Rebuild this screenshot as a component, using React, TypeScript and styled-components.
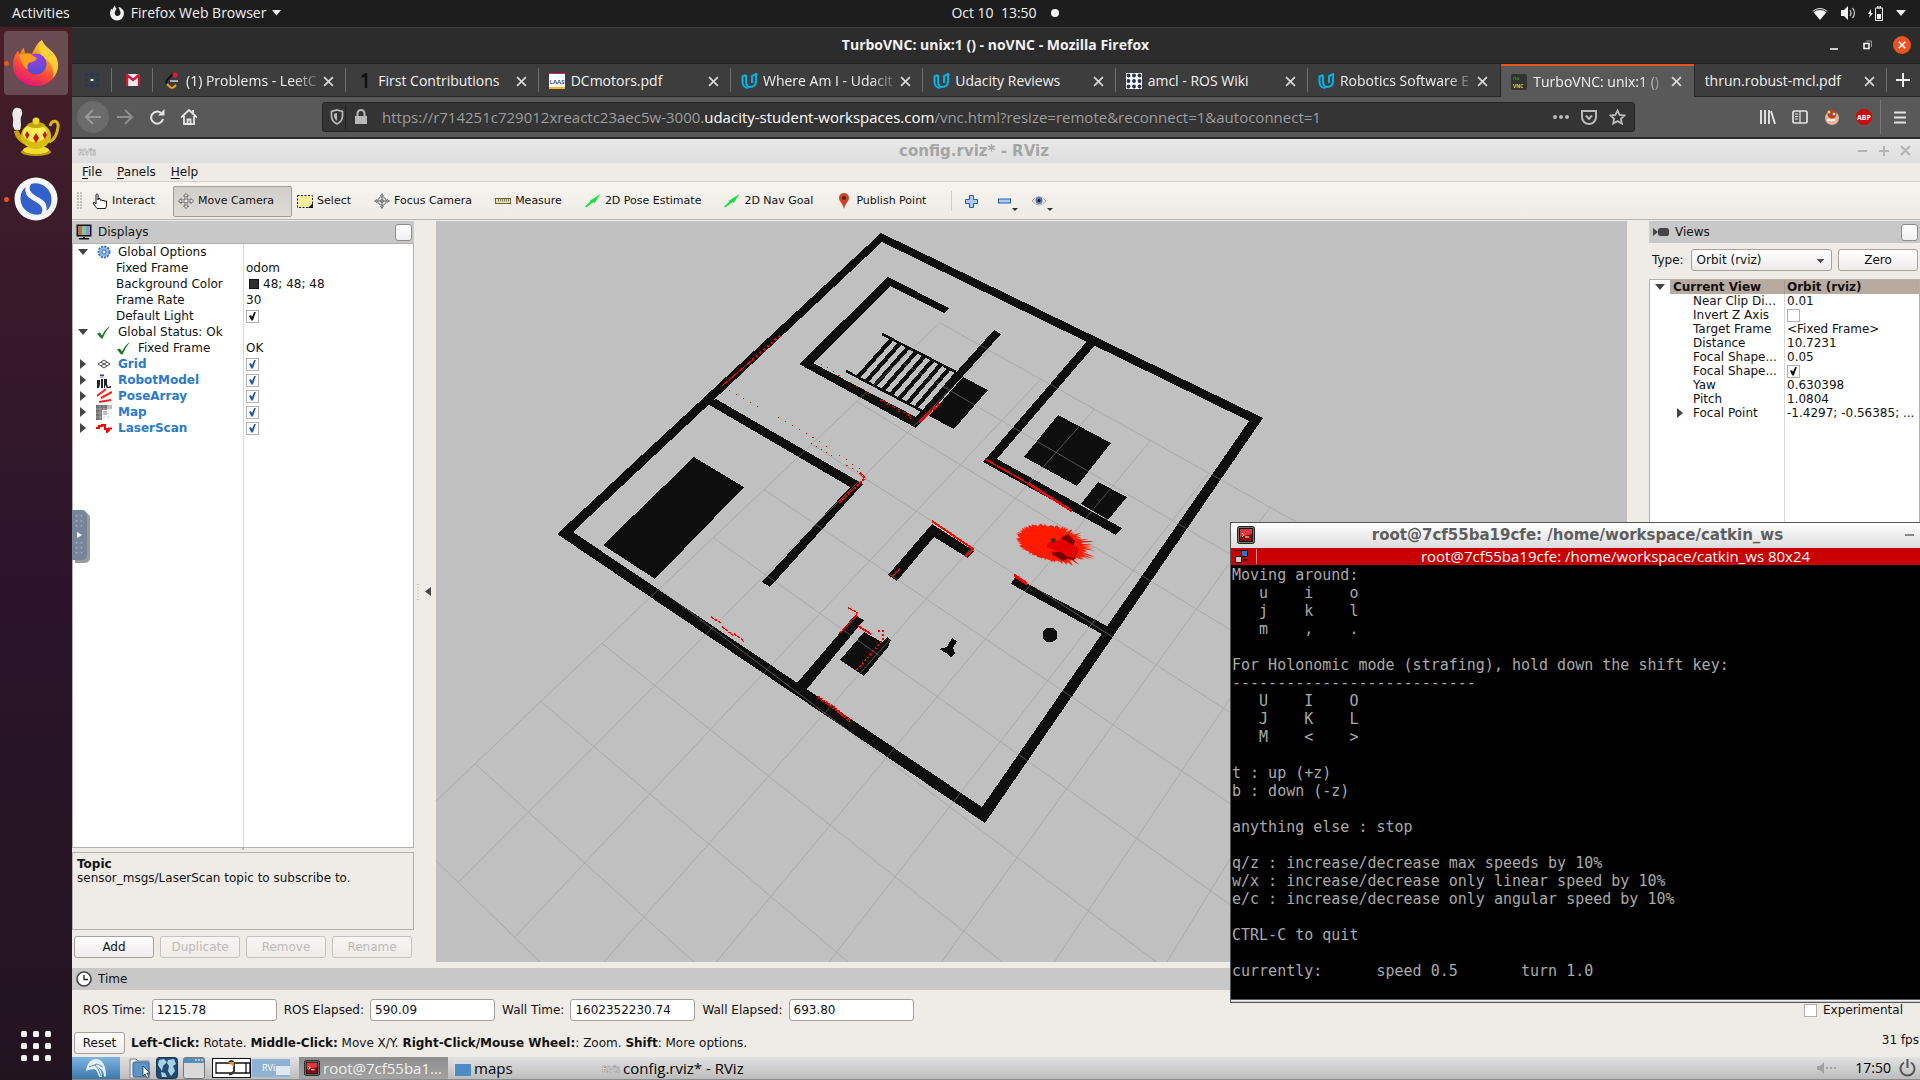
import React from "react";
import styled, { createGlobalStyle, css } from "styled-components";

const UI = `"Open Sans", "Noto Sans", sans-serif`;
const QT = `"DejaVu Sans", "Noto Sans", sans-serif`;
const MONO = `"DejaVu Sans Mono", "Liberation Mono", monospace`;

const Global = createGlobalStyle`
  *, *::before, *::after { box-sizing: border-box; }
  body { margin: 0; background: #2c1429; }
  button, input, select { font: inherit; color: inherit; margin: 0; padding: 0; border: 0; background: none; }
  svg { display: block; flex: none; }
`;

/* ---------- desktop shell ---------- */

const Desktop = styled.div`
  position: relative;
  display: flex;
  flex-direction: column;
  height: 100vh;
  overflow: hidden;
  font: 14px/20px ${UI};
  color: #f2f2f2;
`;

const TopBar = styled.header`
  display: grid;
  grid-template-columns: 1fr auto 1fr;
  align-items: center;
  flex: none;
  height: 27px;
  padding: 0 14px 1px 12px;
  background: #1d1d1d;
`;

const TopGroup = styled.div<{ $end?: boolean }>`
  display: flex;
  align-items: center;
  gap: ${(p) => (p.$end ? "12px" : "6px")};
  justify-content: ${(p) => (p.$end ? "flex-end" : "flex-start")};
`;

const ShellButton = styled.button<{ $wide?: boolean }>`
  display: flex;
  align-items: center;
  gap: 6px;
  white-space: pre;
  margin-right: ${(p) => (p.$wide ? "33px" : "0")};
`;

const ClockButton = styled(ShellButton)`
  gap: 14px;
  margin-left: 92px;
  &::after {
    content: "";
    width: 8px;
    height: 8px;
    border-radius: 50%;
    background: #f2f2f2;
  }
`;

const Body = styled.div`
  display: flex;
  flex: 1;
  min-height: 0;
`;

const Dock = styled.nav`
  display: flex;
  flex-direction: column;
  align-items: center;
  gap: 4px;
  flex: none;
  width: 72px;
  padding: 4px 0 16px;
  background: linear-gradient(#471f27 0, #3c1b2a 190px, #2b142b 560px, #22141f 100%);
`;

const DockItem = styled.button<{ $active?: boolean; $running?: boolean; $last?: boolean }>`
  position: relative;
  display: grid;
  place-items: center;
  width: 64px;
  border-radius: 4px;
  background: ${(p) => (p.$active ? "rgba(255,255,255,.2)" : "transparent")};
  margin-top: ${(p) => (p.$last ? "auto" : "0")};
  height: ${(p) => (p.$last ? "36px" : "64px")};
  ${(p) =>
    p.$running &&
    css`
      &::before {
        content: "";
        position: absolute;
        left: 0;
        top: 30px;
        width: 5px;
        height: 5px;
        border-radius: 50%;
        background: #e95420;
      }
    `}
`;

const Main = styled.main`
  display: flex;
  flex-direction: column;
  flex: 1;
  min-width: 0;
`;

/* ---------- browser chrome ---------- */

const WinTitle = styled.div`
  display: grid;
  grid-template-columns: 1fr auto 1fr;
  align-items: center;
  flex: none;
  height: 37px;
  padding: 0 9px 1px 8px;
  background: #2c2c2c;
  border-top: 1px solid #3b3b3b;
  border-bottom: 1px solid #222;
  h1 { grid-column: 2; margin: 0; font-size: 14px; font-weight: 700; }
`;

const WinButtons = styled.div`
  display: flex;
  align-items: center;
  justify-content: flex-end;
  gap: 16px;
`;

const WinButton = styled.button<{ $close?: boolean }>`
  display: grid;
  place-items: center;
  width: 18px;
  height: 18px;
  border-radius: 50%;
  background: ${(p) => (p.$close ? "#e95420" : "transparent")};
`;

const TabStrip = styled.div`
  display: flex;
  flex: none;
  height: 33px;
  background: #3d3d3d;
  border-bottom: 1px solid #262626;
`;

const PinnedTab = styled.button`
  display: grid;
  place-items: center;
  width: 41px;
  border-right: 1px solid transparent;
  background: linear-gradient(#6f6f6f, #6f6f6f) right center / 1px 24px no-repeat;
`;

const TabBox = styled.div<{ $active?: boolean; $line?: boolean }>`
  display: flex;
  align-items: center;
  flex: 1 1 0;
  min-width: 0;
  padding: 2px 12px 0 10px;
  background: ${(p) =>
    p.$active ? "#595959" : p.$line ? "linear-gradient(#6f6f6f, #6f6f6f) right center / 1px 24px no-repeat" : "none"};
  ${(p) =>
    p.$active &&
    css`
      margin-bottom: -1px;
      border-left: 1px solid #262626;
      border-right: 1px solid #262626;
      box-shadow: inset 0 2px #e95420;
    `}
`;

const TabName = styled.button<{ $fade?: boolean }>`
  display: flex;
  align-items: center;
  gap: 6px;
  flex: 1;
  min-width: 0;
  overflow: hidden;
  white-space: nowrap;
  color: #f2f2f2;
  ${(p) => p.$fade && css`mask-image: linear-gradient(90deg, #000 calc(100% - 30px), transparent);`}
`;

const TabIconSlot = styled.span`
  display: grid;
  place-items: center;
  flex: none;
  width: 16px;
  height: 20px;
`;

const IconButton = styled.button<{ $w?: number; $round?: boolean }>`
  display: grid;
  place-items: center;
  flex: none;
  width: ${(p) => p.$w ?? 32}px;
  height: 32px;
  border-radius: ${(p) => (p.$round ? "50%" : "2px")};
  background: ${(p) => (p.$round ? "#6b6b6b" : "none")};
  color: ${(p) => (p.$round ? "#999" : "#e4e4e4")};
`;

const NavBar = styled.div`
  display: flex;
  align-items: center;
  flex: none;
  height: 42px;
  padding: 0 1px 0 5px;
  background: #595959;
  border-bottom: 2px solid #2b2b2b;
`;

const UrlBox = styled.div`
  display: flex;
  align-items: center;
  flex: 1;
  height: 30px;
  margin: 0 117px 0 117px;
  padding: 0 3px 0 6px;
  border: 1px solid #242424;
  border-radius: 3px;
  background: #343434;
`;

const UrlText = styled.a`
  flex: 1;
  margin-left: 6px;
  font-size: 15px;
  color: #9c9c9c;
  text-decoration: none;
  white-space: nowrap;
  b { font-weight: 400; color: #fff; }
`;

const VLine = styled.span<{ $h: number; $c?: string }>`
  width: 1px;
  height: ${(p) => p.$h}px;
  background: ${(p) => p.$c ?? "#777"};
`;

/* ---------- RViz ---------- */

const Rviz = styled.section`
  position: relative;
  display: flex;
  flex-direction: column;
  flex: 1;
  min-height: 0;
  background: #efebe7;
  color: #111;
  font: 12px/16px ${QT};
`;

const RvizTitle = styled.div`
  display: grid;
  grid-template-columns: 1fr auto 1fr;
  align-items: center;
  flex: none;
  height: 24px;
  padding: 0 9px 0 6px;
  background: linear-gradient(#e9e9e9, #dedede);
  color: #a5a5a5;
  h2 { margin: 0 41px 0 0; font-size: 15px; }
`;

const MenuBar = styled.nav`
  display: flex;
  gap: 15px;
  flex: none;
  height: 19px;
  padding: 0 10px;
  border-bottom: 1px solid #d3cfcb;
  u { text-underline-offset: 2px; }
`;

const ToolBar = styled.div`
  display: flex;
  align-items: center;
  flex: none;
  height: 38px;
  padding: 1px 5px 0;
  background: linear-gradient(#f8f5f1, #eeebe6);
  border-bottom: 1px solid #b9b5b1;
  font-size: 11px;
`;

const Grip = styled.span`
  width: 5px;
  height: 18px;
  margin-right: 5px;
  background: radial-gradient(circle at 1px 1px, #c5c1bd 1px, transparent 1px) 0 0 / 3px 3px;
`;

const ToolSeparator = styled.span`
  width: 1px;
  height: 20px;
  margin: 0 13px 0 7px;
  background: #d0ccc8;
`;

const Tool = styled.button<{ $on?: boolean }>`
  display: flex;
  align-items: center;
  gap: 4px;
  height: 31px;
  padding: 0 17px 0 4px;
  border: 1px solid ${(p) => (p.$on ? "#a19e9a" : "transparent")};
  border-radius: 2px;
  background: ${(p) => (p.$on ? "linear-gradient(#d2cfcb, #dfdcd8)" : "none")};
  white-space: nowrap;
`;

const MiniTool = styled.button`
  display: flex;
  align-items: center;
  width: 33px;
  height: 31px;
`;

const Workspace = styled.div`
  display: flex;
  flex: 1;
  min-height: 0;
  padding-top: 1px;
`;

const Side = styled.aside<{ $w: number }>`
  display: flex;
  flex-direction: column;
  flex: none;
  width: ${(p) => p.$w}px;
  min-height: 0;
`;

const PanelHead = styled.div`
  display: flex;
  align-items: center;
  gap: 6px;
  flex: none;
  height: 22px;
  padding: 0 2px 0 4px;
  background: #c8c8c8;
  h3 { margin: 0; flex: 1; font-size: 12px; font-weight: 400; }
`;

const FloatButton = styled.button`
  width: 17px;
  height: 17px;
  border: 1px solid #8e8e8e;
  border-radius: 3px;
  background: linear-gradient(#fff, #efefef);
`;

const TreeBox = styled.div<{ $split: number }>`
  flex: 1;
  min-height: 0;
  overflow: hidden;
  border: 1px solid #b4b0ac;
  background: linear-gradient(#d9d9d9, #d9d9d9) ${(p) => p.$split}px 0 / 1px 100% no-repeat, #fff;
`;

const Tree = styled.table<{ $row: number; $split: number }>`
  width: 100%;
  border-collapse: collapse;
  table-layout: fixed;
  line-height: ${(p) => p.$row}px;
  th, td { height: ${(p) => p.$row}px; padding: 0; text-align: left; font-weight: 400; white-space: nowrap; overflow: hidden; }
  th { width: ${(p) => p.$split + 1}px; }
  td { padding-left: 2px; }
`;

const Key = styled.div<{ $depth: "top" | "leaf" | "child" }>`
  display: flex;
  align-items: center;
  padding-left: ${(p) => ({ top: 5, leaf: 43, child: 43 })[p.$depth]}px;
`;

const KeyIcon = styled.span`
  display: grid;
  place-items: center;
  width: 16px;
  height: 14px;
  margin-right: 6px;
`;

const KeyArrow = styled.span`
  display: grid;
  place-items: center;
  width: 10px;
  height: 14px;
  margin-right: 8px;
`;

const KeyLabel = styled.span<{ $blue?: boolean }>`
  color: ${(p) => (p.$blue ? "#2a7bc8" : "inherit")};
  font-weight: ${(p) => (p.$blue ? 700 : 400)};
`;

const Swatch = styled.span`
  display: inline-block;
  width: 10px;
  height: 10px;
  margin: 0 4px 0 3px;
  vertical-align: -1px;
  border: 1px solid #111;
  background: #303030;
`;

const Check = styled.input<{ $c?: string }>`
  appearance: none;
  display: block;
  width: 13px;
  height: 13px;
  border: 1px solid #b3afab;
  background: #fff;
  &:checked::after {
    content: "";
    display: block;
    width: 7px;
    height: 9px;
    margin: 1px 0 0 2px;
    background: ${(p) => p.$c ?? "#111"};
    clip-path: polygon(0 50%, 30% 40%, 42% 62%, 78% 0, 100% 0, 56% 100%, 34% 100%);
  }
`;

const SplitterRow = styled.div`
  flex: none;
  height: 4px;
  background: radial-gradient(circle at 1px 1px, #bdb9b5 1px, transparent 1px) center / 3px 4px no-repeat;
`;

const Help = styled.div`
  flex: none;
  height: 78px;
  padding: 4px;
  border: 1px solid #b4b0ac;
  line-height: 14px;
  p { margin: 0; }
`;

const ButtonRow = styled.div`
  display: grid;
  grid-template-columns: repeat(4, 1fr);
  gap: 6px;
  flex: none;
  padding: 6px 2px 10px;
`;

const PushButton = styled.button<{ $w?: number }>`
  width: ${(p) => (p.$w ? `${p.$w}px` : "auto")};
  height: 22px;
  border: 1px solid #a5a19d;
  border-radius: 3px;
  background: linear-gradient(#fff, #eeecea);
  line-height: 18px;
  &:disabled { color: #bdbab7; border-color: #c5c2bf; background: linear-gradient(#f8f6f4, #eeebe8); }
`;

const Gutter = styled.button<{ $w: number }>`
  display: flex;
  align-items: center;
  justify-content: center;
  gap: 6px;
  flex: none;
  width: ${(p) => p.$w}px;
  padding: 0 2px 6px 0;
`;

const Viewport = styled.div`
  flex: 1;
  min-width: 0;
  margin-bottom: 6px;
  overflow: hidden;
  background: #c0c0c0;
  svg { width: 100%; height: 100%; }
`;

const TypeRow = styled.div`
  display: flex;
  align-items: center;
  flex: none;
  height: 36px;
  padding: 0 2px 2px 3px;
`;

const TypeSelect = styled.select`
  appearance: none;
  flex: 1;
  height: 22px;
  margin: 0 6px 0 7px;
  padding: 0 5px 1px;
  border: 1px solid #a5a19d;
  border-radius: 3px;
  background: linear-gradient(45deg, transparent 50%, #555 50%) calc(100% - 10px) 9px / 4px 4px no-repeat,
    linear-gradient(-45deg, transparent 50%, #555 50%) calc(100% - 6px) 9px / 4px 4px no-repeat,
    linear-gradient(#fff, #eeecea);
`;

const CurrentRow = styled.tr`
  th, td { font-weight: 700; background: #b9aaa0; }
  th { background: linear-gradient(90deg, #fff 20px, #b9aaa0 20px, #b9aaa0 calc(100% - 1px), #a89a91 0); }
`;

const TimeRow = styled.div`
  display: flex;
  align-items: center;
  gap: 7px;
  flex: none;
  height: 40px;
  padding: 0 17px 0 11px;
`;

const Field = styled.label`
  display: flex;
  align-items: center;
  gap: 6px;
`;

const TextBox = styled.input`
  width: 125px;
  height: 22px;
  padding: 0 4px;
  border: 1px solid #a5a19d;
  border-radius: 3px;
  background: #fff;
`;

const Experimental = styled.label`
  display: flex;
  align-items: center;
  gap: 6px;
  margin-left: auto;
`;

const StatusRow = styled.div`
  display: flex;
  align-items: center;
  gap: 6px;
  flex: none;
  height: 27px;
  padding: 0 1px 1px 2px;
  p { margin: 0; flex: 1; }
`;

const Fps = styled.span`
  padding-bottom: 6px;
`;

const TaskBar = styled.footer`
  display: flex;
  align-items: center;
  flex: none;
  height: 23px;
  background: linear-gradient(#e2e2e2, #bcbcbc);
  border-bottom: 1px solid #8b8b8b;
  color: #000;
  font: 14px/20px ${UI};
`;

const StartButton = styled.button`
  display: grid;
  place-items: center;
  width: 48px;
  height: 22px;
  background: linear-gradient(#7eb4e0, #3d78ab);
`;

const Launchers = styled.div`
  display: flex;
  align-items: center;
  gap: 5px;
  padding: 0 7px 0 9px;
`;

const Pager = styled.div`
  display: flex;
  margin-right: 8px;
`;

const Task = styled.button<{ $on?: boolean }>`
  display: flex;
  align-items: center;
  gap: 3px;
  width: 149px;
  height: 22px;
  padding: 0 5px;
  font-size: 15px;
  white-space: nowrap;
  background: ${(p) => (p.$on ? "linear-gradient(#8d8d8d, #a3a3a3)" : "none")};
  color: ${(p) => (p.$on ? "#f0f0f0" : "#000")};
`;

const Tray = styled.div`
  display: flex;
  align-items: center;
  gap: 8px;
  margin-left: auto;
  padding-right: 4px;
`;

const VncHandle = styled.button`
  position: absolute;
  left: 0;
  top: 371px;
  display: grid;
  place-items: center;
  width: 15px;
  height: 50px;
  border-radius: 0 5px 5px 0;
  background: #76859a;
  box-shadow: 3px 3px 0 #9a9a9a;
`;

/* ---------- terminal ---------- */

const Terminal = styled.section`
  position: absolute;
  right: 0;
  bottom: 77px;
  display: flex;
  flex-direction: column;
  width: 690px;
  height: 481px;
  border: 1px solid #55585a;
  border-right: 0;
  background: #000;
`;

const TermTitle = styled.div`
  display: grid;
  grid-template-columns: 1fr auto 1fr;
  align-items: center;
  flex: none;
  height: 25px;
  padding: 0 6px 1px;
  background: linear-gradient(#fff, #dcdcdc);
  color: #5e5e5e;
  h2 { margin: 0 0 0 4px; font: 700 15px/20px ${QT}; }
`;

const TermHead = styled.div`
  display: flex;
  align-items: center;
  gap: 7px;
  flex: none;
  height: 17px;
  padding-left: 4px;
  background: #c80000;
  color: #fff;
  p { margin: 0 0 0 47px; flex: 1; text-align: center; font-size: 15px; line-height: 17px; }
`;

const TermText = styled.pre`
  flex: 1;
  min-height: 0;
  margin: 0;
  padding: 1px 0 0 1px;
  overflow: hidden;
  color: #a9a9a9;
  font: 15px/18px ${MONO};
`;

const TermFoot = styled.div`
  flex: none;
  height: 3px;
  background: linear-gradient(#fff, #bbb);
  border-top: 1px solid #55585a;
`;

/* ---------- small icons ---------- */

const Cross = ({ s = 11, c = "#d6d6d6", w = 1.6 }: { s?: number; c?: string; w?: number }) => (
  <svg width={s} height={s} viewBox="0 0 10 10"><path d="M1 1l8 8M9 1l-8 8" stroke={c} strokeWidth={w} /></svg>
);

const Caret = ({ c = "#f2f2f2", s = 9 }: { c?: string; s?: number }) => (
  <svg width={s} height={s * 0.6} viewBox="0 0 10 6"><path d="M0 0h10L5 6z" fill={c} /></svg>
);

const CaretRight = () => (
  <svg width="6" height="10" viewBox="0 0 6 10"><path d="M0 0v10l6-5z" fill="#444" /></svg>
);

const FirefoxMono = () => (
  <svg width="16" height="16" viewBox="0 0 16 16">
    <path d="M8 15.500a7 7 0 0 1-7-7c0-2 .6-3.600 1.500-4.800l.9 1C4 3 5.200 1.500 6 .5c0 1.500.5 2.300 1.500 3L6 6.500c-1 2.500.8 4.500 2.500 4.500s3.200-1.500 3-3.500C11.300 5.500 10 4 9.500 2c3 .8 5.500 3 5.500 6.300a7 7 0 0 1-7 7.200z" fill="#f0f0f0" />
  </svg>
);

const FirefoxLogo = () => (
  <svg width="48" height="48" viewBox="0 0 48 48">
    <defs>
      <linearGradient id="ffBody" x1=".8" y1="0" x2=".3" y2="1">
        <stop offset="0" stopColor="#ffe94a" /><stop offset=".35" stopColor="#ff9a1f" />
        <stop offset=".65" stopColor="#ff4b36" /><stop offset="1" stopColor="#e2107a" />
      </linearGradient>
      <radialGradient id="ffGlobe" cx=".5" cy=".2" r=".9">
        <stop offset="0" stopColor="#9c3df0" /><stop offset="1" stopColor="#4352c8" />
      </radialGradient>
    </defs>
    <path d="M30 1c1 4 5 7 8 10 5 4 8 9 8 15 0 12-10 21-22 21S1 38 1 26c0-6 2-11 5-14l2 3c1-3 2-5 4-6l1 6c2-1 5-1 7 0 3-6 5-11 10-14z" fill="url(#ffBody)" />
    <path d="M30 1c1 4 5 7 8 10 5 4 8 9 8 15 0 5-2 10-5 13 1-10-2-16-9-20-6-4-6-12-2-18z" fill="#ffd93b" opacity=".8" />
    <circle cx="24" cy="25" r="10.500" fill="url(#ffGlobe)" />
    <path d="M7 16c4-2 9-2 13 0 2 1 4 3 5 3-1 3-5 4-8 5-2 2-2 4-1 6-4-1-7-6-9-14z" fill="#ff9d1e" />
  </svg>
);

const Teapot = () => (
  <svg width="50" height="50" viewBox="0 0 50 50">
    <path d="M4 24c-4-5-1-8-2-12C0 6 3 1 7 2c5 0 5 6 3 9-1 4 1 8-1 13z" fill="#ececec" />
    <path d="M39 20c2-7 9-6 8 1-1 8-4 13-9 15" fill="none" stroke="#d9b70f" strokeWidth="3" />
    <path d="M3 25l4-1c3 6 6 9 9 10l1 6C9 37 4 32 3 25z" fill="#c8a50a" />
    <ellipse cx="25" cy="46" rx="15" ry="4" fill="#bd9b08" /><ellipse cx="25" cy="44" rx="13" ry="4" fill="#f2dc32" />
    <ellipse cx="25" cy="30" rx="15" ry="13" fill="#d9bc12" />
    <ellipse cx="24" cy="27" rx="12" ry="9" fill="#fbee55" />
    <ellipse cx="25" cy="19" rx="9" ry="3" fill="#c4a40c" /><circle cx="25" cy="15" r="3.500" fill="#f0d92e" />
    <path d="M16 25l2.500 4-2.500 4-2-4zM25 27l3 5-3 5-3-5zM34 25l2 4-2 4-2.500-4z" fill="#c81414" />
  </svg>
);

const NoteLogo = () => (
  <svg width="44" height="44" viewBox="0 0 44 44">
    <circle cx="22" cy="22" r="21.500" fill="#f7f7f7" />
    <path d="M17 7C27 4 38 12 37.500 23c0 5-2 8-5 11 1-7-2-10-7-13C18 17 13 13 17 7z" fill="#3361cc" />
    <path d="M27 37C17 40 6 32 6.500 21c0-5 2-8 5-11-1 7 2 10 7 13 7.500 4 12.500 8 8.500 14z" fill="#3361cc" />
  </svg>
);

const AppsGrid = () => (
  <svg width="32" height="32" viewBox="0 0 32 32" fill="#f2f2f2">
    {[1, 13, 25].map((y) => [1, 13, 25].map((x) => <rect key={`${x}-${y}`} x={x} y={y} width="6" height="6" rx="1.500" />))}
  </svg>
);

const DotGrid = ({ bg, dim }: { bg?: string; dim?: boolean }) => (
  <svg width="16" height="16" viewBox="0 0 16 16">
    {bg && <rect width="16" height="16" fill={bg} />}
    {[2.5, 8, 13.5].map((y) => [2.5, 8, 13.5].map((x) => (
      <circle key={`${x}-${y}`} cx={x} cy={y} r="1.900" fill={dim ? "#22385c" : "#22305e"} />
    )))}
    {dim && <rect x="6.500" y="7" width="3" height="2" fill="#e6eef8" />}
  </svg>
);

const Gmail = () => (
  <svg width="14" height="12" viewBox="0 0 14 12">
    <rect width="14" height="12" fill="#eee" /><path d="M1 12V1l6 5 6-5v11" fill="none" stroke="#d8103a" strokeWidth="2.400" />
  </svg>
);

const Leet = () => (
  <svg width="16" height="18" viewBox="0 0 16 18" fill="none" strokeWidth="2">
    <path d="M9 2L3 8c-1 1-1 3 0 4" stroke="#111" /><path d="M3 12l3 3c1 1 3 1 4 0l2-2" stroke="#f0a11a" />
    <path d="M6 9h8" stroke="#aaa" /><circle cx="11" cy="3" r="1.500" fill="#e8163e" stroke="#e8163e" />
  </svg>
);

const Tally = () => (
  <svg width="16" height="16" viewBox="0 0 16 16"><path d="M6 4l4-3v14" fill="none" stroke="#111" strokeWidth="2.500" /></svg>
);

const Laas = () => (
  <svg width="16" height="16" viewBox="0 0 16 16">
    <rect width="16" height="16" fill="#fff" /><rect width="16" height="1" fill="#d02a64" /><rect y="14" width="16" height="2" fill="#f2b51c" />
    <text x="8" y="11" textAnchor="middle" fontSize="6" fontWeight="700" fontFamily="Open Sans, sans-serif" fill="#3c5a72">LAAS</text>
  </svg>
);

const Udacity = () => (
  <svg width="16" height="16" viewBox="0 0 16 16" fill="none" stroke="#02b3e4" strokeWidth="2">
    <path d="M5 2L1.500 3.500V9c0 4 3 6 6 6" /><path d="M5 2v6c0 4 1 6 4 6 4 0 6-2 6-6V1l-4 2v7" />
  </svg>
);

const VncIcon = () => (
  <svg width="16" height="16" viewBox="0 0 16 16">
    <rect width="16" height="16" rx="2" fill="#333" />
    <text x="2" y="6" fontSize="5" fontWeight="700" fontFamily="Open Sans, sans-serif" fill="#1d9a1d">no</text>
    <text x="2" y="14" fontSize="5" fontWeight="700" fontFamily="Open Sans, sans-serif" fill="#d8d820">VNC</text>
  </svg>
);

const RvizMark = ({ c = "#999" }: { c?: string }) => (
  <svg width="18" height="14" viewBox="0 0 18 14">
    <text x="0" y="11" fontSize="9" fontWeight="700" fontFamily="Open Sans, sans-serif" fill="#f4f4f4" stroke={c} strokeWidth=".5">RViz</text>
  </svg>
);

const TermIcon = ({ s = 16 }: { s?: number }) => (
  <svg width={s} height={s} viewBox="0 0 18 18">
    <rect x=".5" y=".5" width="17" height="17" rx="2" fill="#777" stroke="#222" />
    <rect x="2.500" y="2.500" width="13" height="13" fill="#8a0a0e" stroke="#111" /><path d="M3 3h12v5L3 11z" fill="#dc3a3a" />
    <path d="M5 7l2 2-2 2M8 11h4" stroke="#fff" fill="none" />
  </svg>
);

/* ---------- tool icons ---------- */

const Hand = () => (
  <svg width="16" height="16" viewBox="0 0 16 16"><path d="M4 10V2c0-1.500 2-1.500 2 0v5V5.500h2V7h2v.5h2V8h2.500v5l-1 2.500H5L1 10c1-1.500 2-.5 3 .8z" fill="#fff" stroke="#222" /></svg>
);
const Move = () => (
  <svg width="16" height="16" viewBox="0 0 16 16"><path d="M8 .5L10.500 3H9v4h4V5.500L15.500 8 13 10.500V9H9v4h1.500L8 15.500 5.500 13H7V9H3v1.500L.5 8 3 5.500V7h4V3H5.500z" fill="#eee" stroke="#555" strokeWidth=".9" /></svg>
);
const SelectIcon = () => (
  <svg width="16" height="16" viewBox="0 0 16 16"><rect x=".5" y="2.500" width="15" height="12" fill="#f6efa0" stroke="#222" strokeDasharray="2 1.500" /><path d="M16 10v5h-5z" fill="#111" /></svg>
);
const Focus = () => (
  <svg width="16" height="16" viewBox="0 0 16 16" fill="none" stroke="#777">
    <path d="M8 .5L9.500 3h-3zM8 15.500L9.500 13h-3zM.5 8L3 9.500v-3zM15.500 8L13 9.500v-3z" fill="#ddd" />
    <circle cx="8" cy="8" r="4.200" fill="#ddd" /><circle cx="8" cy="8" r="1.500" /><path d="M8 3v10M3 8h10" />
  </svg>
);
const Ruler = () => (
  <svg width="16" height="8" viewBox="0 0 16 8"><rect x=".5" y="1.500" width="15" height="5" fill="#e8dfa8" stroke="#6a6540" /><path d="M3.500 2v2.500M5.500 2v2.500M7.500 2v2.500M9.500 2v2.500M11.500 2v2.500M13.500 2v2.500" stroke="#6a6540" strokeWidth=".8" /></svg>
);
const GreenArrow = () => (
  <svg width="16" height="14" viewBox="0 0 16 14"><path d="M0 12.500l5.500-5L4.500 7 15.500 0l-6 9-1-1L1 13.500z" fill="#14e03a" /></svg>
);
const Pin = () => (
  <svg width="16" height="16" viewBox="0 0 16 16"><path d="M8 0a5 5 0 0 1 5 5c0 3-4 6-5 11C7 11 3 8 3 5a5 5 0 0 1 5-5z" fill="#c94528" /><circle cx="8" cy="5" r="2" fill="#5e1d10" /></svg>
);
const Plus = () => (
  <svg width="13" height="13" viewBox="0 0 13 13"><path d="M4.500.5h4v4h4v4h-4v4h-4v-4h-4v-4h4z" fill="#a9ccf0" stroke="#2a5a9c" /></svg>
);
const Minus = () => (
  <svg width="20" height="20" viewBox="0 0 20 20"><rect x=".5" y="8" width="12" height="4" fill="#a9ccf0" stroke="#2a5a9c" /><path d="M14 17h6l-3 3z" fill="#333" /></svg>
);
const Eye = () => (
  <svg width="22" height="20" viewBox="0 0 22 20"><path d="M1 10q7-9 14 0-7 8-14 0z" fill="#eee" stroke="#aaa" /><circle cx="8" cy="9.500" r="3.500" fill="#5b74b8" /><circle cx="8" cy="9.500" r="1.500" fill="#111" /><path d="M16 17h6l-3 3z" fill="#333" /></svg>
);

/* ---------- tree icons ---------- */

const Monitor = () => (
  <svg width="16" height="16" viewBox="0 0 16 16"><rect x=".5" y=".5" width="15" height="12" fill="#111" /><path d="M2 2h4v9H2z" fill="#b86b6b" /><path d="M6 2h4v9H6z" fill="#7ed07e" /><path d="M10 2h4v9h-4z" fill="#8f8fe0" /><path d="M7 13h2v1h4v1.500H3V14h4z" fill="#111" /></svg>
);
const Gear = () => (
  <svg width="14" height="14" viewBox="0 0 14 14"><circle cx="7" cy="7" r="5.500" fill="#9cc3ea" stroke="#3f78b5" strokeWidth="2" strokeDasharray="2 1.200" /><circle cx="7" cy="7" r="4" fill="#8ab6e4" /><circle cx="7" cy="7" r="2" fill="#dcebf9" stroke="#3f78b5" /></svg>
);
const Tick = () => (
  <svg width="14" height="13" viewBox="0 0 14 13"><path d="M0 7.500l3-1L5 9.500Q8 3 13 0 8 6 5.500 12.500H4z" fill="#1f7a24" /></svg>
);
const GridIcon = () => (
  <svg width="14" height="10" viewBox="0 0 14 10" fill="none" stroke="#444"><path d="M7 1l6 4-6 4-6-4zM4 3l6 4M10 3L4 7" /></svg>
);
const Robot = () => (
  <svg width="16" height="16" viewBox="0 0 16 16">
    <path d="M4 1.500h4v1.500H4z" fill="#3c3cae" /><path d="M4.500 3h3v2h-3z" fill="#bbb" />
    <path d="M1 7h3v4l-1 4H1zM5 6h2v9H5zM8 6h3v5l1 3 3-1v2h-4L9 12v3H8z" fill="#222" />
  </svg>
);
const Poses = () => (
  <svg width="15" height="14" viewBox="0 0 15 14" stroke="#f22" strokeWidth="2"><path d="M0 7l9-7M4 9l11-6M2 13l12-2" /></svg>
);
const MapIcon = () => (
  <svg width="16" height="15" viewBox="0 0 16 15"><path d="M0 0h11v5H6v10H0z" fill="#707070" /><path d="M11 0h5v4h-5zM7 6h4v4H7z" fill="#bbb" /><path d="M0 4h16M0 8h16M0 12h16M4 0v15M8 0v15M12 0v15" stroke="#ccc" strokeWidth=".5" /></svg>
);
const Laser = () => (
  <svg width="16" height="10" viewBox="0 0 16 10"><path d="M0 5h3V3h3V2h3v4h2v3l2-2V5.500h3" fill="none" stroke="#f00" strokeWidth="2" /></svg>
);
const Camera = () => (
  <svg width="16" height="10" viewBox="0 0 16 10"><path d="M0 1l5 4-5 4z" fill="#444" /><rect x="5" y="1" width="11" height="8" rx="2.500" fill="#444" /></svg>
);
const Clock = () => (
  <svg width="16" height="16" viewBox="0 0 16 16"><circle cx="8" cy="8" r="7" fill="#fff" stroke="#444" strokeWidth="1.600" /><path d="M8 4v4.500h4" fill="none" stroke="#222" strokeWidth="1.300" /></svg>
);

/* ---------- 3D scene ---------- */

type Pt = [number, number];

/* Projects ground cell (u, v) onto the screen through the four known corners of a 6 x 5 patch. */
const project = (() => {
  const [a, b, c, d]: Pt[] = [[939.7, 322.7], [1270, 507.3], [1066.7, 788.7], [713.3, 537.7]];
  const sx = a[0] - b[0] + c[0] - d[0];
  const sy = a[1] - b[1] + c[1] - d[1];
  const dx1 = b[0] - c[0], dx2 = d[0] - c[0], dy1 = b[1] - c[1], dy2 = d[1] - c[1];
  const den = dx1 * dy2 - dx2 * dy1;
  const g = (sx * dy2 - dx2 * sy) / den;
  const h = (dx1 * sy - sx * dy1) / den;
  return (u: number, v: number): Pt => {
    const s = u / 6, t = v / 5;
    const w = g * s + h * t + 1;
    return [
      ((b[0] - a[0] + g * b[0]) * s + (d[0] - a[0] + h * d[0]) * t + a[0]) / w,
      ((b[1] - a[1] + g * b[1]) * s + (d[1] - a[1] + h * d[1]) * t + a[1]) / w,
    ];
  };
})();

const gridPath = Array.from({ length: 11 }, (_, i) => {
  const seg = (p: Pt, q: Pt) => `M${p[0].toFixed(1)} ${p[1].toFixed(1)}L${q[0].toFixed(1)} ${q[1].toFixed(1)}`;
  return seg(project(0, i), project(10, i)) + seg(project(i, 0), project(i, 10));
}).join("");

const walls = [
  "888,277 949,308 944,313 890,286 813,363 916,417 994,330 1001,334 916,428 799,364",
  "963,377 988,390 954,429 929,416",
  "716,399 863,484 770,587 762,582 850,487 706,403",
  "694,457 744,487 655,579 603,545",
  "1088,340 1096,344 997,459 1122,528 1116,535 983,462",
  "1058,415 1111,443 1077,486 1024,457",
  "1098,482 1127,497 1108,520 1081,504",
  "932,524 974,551 968,558 934,537 897,581 888,575",
  "1015,577 1107,626 1102,634 1011,584",
  "939,649 947,647 952,638 957,641 953,648 955,653 951,657 946,653",
  "855,615 864,620 807,689 797,683",
  "864,632 882,642 887,637 891,640 888,647 864,676 840,660",
];

const noise = (n: number) => {
  const x = Math.sin(n * 12.9898) * 43758.5453;
  return x - Math.floor(x);
};

const cloud = Array.from({ length: 220 }, (_, i) => {
  const t = (i / 220) * Math.PI * 2;
  const jag = noise(i + 1);
  const right = Math.max(0, Math.cos(t));
  const r = 0.9 + jag * 0.14 + jag * jag * right * 0.34;
  return `${(452 + Math.cos(t) * 102 * r).toFixed(1)},${(670 + Math.sin(t) * 54 * r + Math.cos(t) * 17 * r).toFixed(1)}`;
}).join(" ");

const Scene = () => (
  <svg viewBox="436 221 1191 741" preserveAspectRatio="xMidYMid slice" role="img" aria-label="Robot map">
    <g shapeRendering="crispEdges" fill="#0e0e0e">
      <path fillRule="evenodd" d="M881 233L1263 418 985 823 557 534zM882 242L573 532 982 807 1249 421z" />
      {walls.map((w) => <polygon key={w} points={w} />)}
      <circle cx="1050" cy="635" r="7.500" />
      <path d="M882 334l74 38M846 371l76 40" stroke="#0e0e0e" strokeWidth="2.500" />
      {Array.from({ length: 9 }, (_, i) => (
        <path key={i} d={`M${891 + 8.3 * i} ${340 + 4.1 * i}L${858 + 8.3 * i} ${377 + 4.3 * i}`} stroke="#0e0e0e" strokeWidth="4.200" />
      ))}
    </g>
    <path d={gridPath} stroke="rgba(150,150,150,.5)" fill="none" />
    <path d="M1081 505l27 15" stroke="#ddd" strokeDasharray="1 1" />
    <g stroke="#f00" fill="none" shapeRendering="crispEdges">
      <path d="M722 386l30-26" />
      <path d="M752 360l29-25" strokeWidth="2" strokeDasharray="2 3" />
      <path d="M729 390l33 19 46 25 55 37" strokeDasharray="1 7" />
      <path d="M811 443l50 31" strokeDasharray="1 5" />
      <path d="M860 473l5 5-26 25" strokeWidth="2" strokeDasharray="3 1" />
      <path d="M815 360l36 23 66 39" strokeDasharray="1 6" />
      <path d="M882 400l30 17" strokeDasharray="3 3" />
      <path d="M919 422l20-18" strokeWidth="2.500" strokeDasharray="5 1" />
      <path d="M985 459l44 25" strokeWidth="1.500" />
      <path d="M1029 484l43 27" strokeWidth="2.500" />
      <path d="M932 521l41 28-8 8" strokeWidth="2" />
      <path d="M892 576l8-7" strokeDasharray="3 1" strokeWidth="1.500" />
      <path d="M1014 575l13 9" strokeWidth="3" />
      <path d="M848 608l9 4-1 4-16 17" strokeWidth="1.500" strokeDasharray="4 1" />
      <path d="M858 626l13 8" strokeWidth="2" />
      <path d="M878 631h5v9l-26 30" strokeDasharray="2 2" strokeWidth="1.500" />
      <path d="M711 617l10 6M722 627l11 8M734 634l10 7" strokeWidth="1.500" strokeDasharray="3 1" />
      <path d="M818 697l15 10 17 14" strokeWidth="3" strokeDasharray="2 1" />
    </g>
    <g transform="translate(900 320) scale(.3333)">
      <polygon points={cloud} fill="#ff1a00" />
      <path d="M487 650l18-7 20 20-5 15-36-20zM455 695l30 0 22 18-18 10-30-18zM528 680l8 8-14 33-20-6z" fill="#7d0000" />
      <path d="M445 668l35-8 16 2 40 24-16 30-38-20-42-14z" fill="#e60000" />
      <circle cx="460" cy="661" r="7" fill="#3a2f2f" />
    </g>
  </svg>
);

/* ---------- data ---------- */

const tabs: { name: string; icon?: React.ReactNode; active?: boolean; fade?: boolean; line?: boolean }[] = [
  { name: "(1) Problems - LeetC", icon: <Leet />, fade: true, line: true },
  { name: "First Contributions", icon: <Tally />, line: true },
  { name: "DCmotors.pdf", icon: <Laas />, line: true },
  { name: "Where Am I - Udacit", icon: <Udacity />, fade: true, line: true },
  { name: "Udacity Reviews", icon: <Udacity />, line: true },
  { name: "amcl - ROS Wiki", icon: <DotGrid bg="#fff" />, line: true },
  { name: "Robotics Software E", icon: <Udacity />, fade: true },
  { name: "TurboVNC: unix:1 ()", icon: <VncIcon />, active: true, fade: true },
  { name: "thrun.robust-mcl.pdf", line: true },
];

const tools: [string, React.ReactNode][] = [
  ["Interact", <Hand />], ["Move Camera", <Move />], ["Select", <SelectIcon />], ["Focus Camera", <Focus />],
  ["Measure", <Ruler />], ["2D Pose Estimate", <GreenArrow />], ["2D Nav Goal", <GreenArrow />], ["Publish Point", <Pin />],
];

interface Row {
  k: string;
  v?: React.ReactNode;
  depth?: "top" | "leaf" | "child";
  icon?: React.ReactNode;
  open?: boolean;
  blue?: boolean;
  check?: boolean;
}

const displays: Row[] = [
  { k: "Global Options", icon: <Gear />, open: true },
  { k: "Fixed Frame", v: "odom", depth: "leaf" },
  { k: "Background Color", v: <><Swatch />48; 48; 48</>, depth: "leaf" },
  { k: "Frame Rate", v: "30", depth: "leaf" },
  { k: "Default Light", check: true, depth: "leaf" },
  { k: "Global Status: Ok", icon: <Tick />, open: true },
  { k: "Fixed Frame", v: "OK", depth: "child", icon: <Tick /> },
  { k: "Grid", icon: <GridIcon />, blue: true, check: true },
  { k: "RobotModel", icon: <Robot />, blue: true, check: true },
  { k: "PoseArray", icon: <Poses />, blue: true, check: true },
  { k: "Map", icon: <MapIcon />, blue: true, check: true },
  { k: "LaserScan", icon: <Laser />, blue: true, check: true },
];

const views: [string, string | boolean][] = [
  ["Near Clip Di...", "0.01"], ["Invert Z Axis", false], ["Target Frame", "<Fixed Frame>"], ["Distance", "10.7231"],
  ["Focal Shape...", "0.05"], ["Focal Shape...", true], ["Yaw", "0.630398"], ["Pitch", "1.0804"],
  ["Focal Point", "-1.4297; -0.56385; ..."],
];

const times = [["ROS Time:", "1215.78"], ["ROS Elapsed:", "590.09"], ["Wall Time:", "1602352230.74"], ["Wall Elapsed:", "693.80"]];

const termText = `Moving around:
   u    i    o
   j    k    l
   m    ,    .

For Holonomic mode (strafing), hold down the shift key:
---------------------------
   U    I    O
   J    K    L
   M    <    >

t : up (+z)
b : down (-z)

anything else : stop

q/z : increase/decrease max speeds by 10%
w/x : increase/decrease only linear speed by 10%
e/c : increase/decrease only angular speed by 10%

CTRL-C to quit

currently:      speed 0.5       turn 1.0`;

const ViewKey = styled.div<{ $root?: boolean }>`
  display: flex;
  align-items: center;
  padding-left: ${(p) => (p.$root ? "5px" : "27px")};
`;

const ArrowSlot = styled.span<{ $w: number }>`
  display: flex;
  align-items: center;
  width: ${(p) => p.$w}px;
  height: 14px;
`;

/* ---------- sections ---------- */

const Browser = () => (
  <>
    <WinTitle>
      <h1>TurboVNC: unix:1 () - noVNC - Mozilla Firefox</h1>
      <WinButtons>
        <WinButton aria-label="Minimize"><svg width="8" height="10"><path d="M0 9h8" stroke="#fff" strokeWidth="1.500" /></svg></WinButton>
        <WinButton aria-label="Restore"><svg width="10" height="10"><path d="M1 3.500h5v5H1z" stroke="#fff" strokeWidth="1.500" fill="none" /><path d="M3 1h5.500v6" stroke="#999" fill="none" /></svg></WinButton>
        <WinButton $close aria-label="Close"><Cross s={8} c="#fff" w={2} /></WinButton>
      </WinButtons>
    </WinTitle>
    <TabStrip>
      <PinnedTab aria-label="Pinned page"><DotGrid dim /></PinnedTab>
      <PinnedTab aria-label="Mail"><Gmail /></PinnedTab>
      {tabs.map((t) => (
        <TabBox key={t.name} $active={t.active} $line={t.line}>
          <TabName $fade={t.fade}>{t.icon && <TabIconSlot>{t.icon}</TabIconSlot>}{t.name}</TabName>
          <button aria-label={`Close ${t.name}`}><Cross /></button>
        </TabBox>
      ))}
      <IconButton $w={33} aria-label="New tab"><svg width="14" height="14"><path d="M7 0v14M0 7h14" stroke="#eee" strokeWidth="2" /></svg></IconButton>
    </TabStrip>
    <NavBar>
      <IconButton $round aria-label="Back"><svg width="16" height="16" fill="none" stroke="currentColor" strokeWidth="2"><path d="M16 8H1M8 1L1 8l7 7" /></svg></IconButton>
      <IconButton aria-label="Forward"><svg width="16" height="16" fill="none" stroke="#8e8e8e" strokeWidth="2"><path d="M0 8h15M8 1l7 7-7 7" /></svg></IconButton>
      <IconButton aria-label="Reload"><svg width="16" height="16" fill="none" stroke="currentColor" strokeWidth="2"><path d="M14 10A6 6 0 1 1 12 4" /><path d="M9 6.500h6.500V0z" fill="currentColor" stroke="none" /></svg></IconButton>
      <IconButton aria-label="Home"><svg width="16" height="16" fill="none" stroke="currentColor" strokeWidth="1.800"><path d="M0 8.500L8 1l8 7.500M3 7v8h10V7M12 4V1" /><path d="M6.500 15v-4.500h3V15" /></svg></IconButton>
      <UrlBox>
        <svg width="16" height="16" viewBox="0 0 16 16"><path d="M8 1l5.500 1.500V7c0 4-2.500 6.500-5.500 8-3-1.500-5.500-4-5.500-8V2.500z" fill="none" stroke="#b9b9b9" strokeWidth="1.700" /><path d="M8 4v8C6 10.500 5 9 5 7V4.700z" fill="#b9b9b9" /></svg>
        <VLine $h={24} $c="#222" />
        <svg width="30" height="16" viewBox="0 0 30 16"><path d="M9 7h12v8H9z" fill="#b9b9b9" /><path d="M11.500 8V4.500a3.500 3.500 0 0 1 7 0V8" fill="none" stroke="#b9b9b9" strokeWidth="2" /></svg>
        <UrlText href="#">https://r714251c729012xreactc23aec5w-3000.<b>udacity-student-workspaces.com</b>/vnc.html?resize=remote&amp;reconnect=1&amp;autoconnect=1</UrlText>
        <IconButton $w={28} aria-label="Page actions"><svg width="16" height="4" fill="#b9b9b9"><circle cx="2" cy="2" r="2" /><circle cx="8" cy="2" r="2" /><circle cx="14" cy="2" r="2" /></svg></IconButton>
        <IconButton $w={28} aria-label="Save to Pocket"><svg width="16" height="15" fill="none" stroke="#b9b9b9" strokeWidth="2"><path d="M1 1h14v6a7 7 0 0 1-14 0z" /><path d="M5 5.500L8 9l3-3.500" /></svg></IconButton>
        <IconButton $w={28} aria-label="Bookmark"><svg width="17" height="16" viewBox="0 0 17 16"><path d="M8.500 1.500l2.100 4.500 4.900.5-3.600 3.300 1 4.800-4.400-2.500-4.400 2.500 1-4.800L1.500 6.500 6.400 6z" fill="none" stroke="#b9b9b9" strokeWidth="1.800" /></svg></IconButton>
      </UrlBox>
      <IconButton aria-label="Library"><svg width="16" height="14" stroke="currentColor" strokeWidth="1.900"><path d="M1 0v14M5 0v14M9 0v14M11 1l4 13" /></svg></IconButton>
      <IconButton aria-label="Sidebar"><svg width="16" height="14" fill="none" stroke="currentColor" strokeWidth="1.700"><rect x="1" y="1" width="14" height="12" rx="1.500" /><path d="M8 1v12M3 4h3M3 6.500h3M3 9h3" strokeWidth="1.200" /></svg></IconButton>
      <IconButton aria-label="Extension"><svg width="16" height="16"><ellipse cx="8" cy="9" rx="7" ry="7" fill="#eab898" /><circle cx="8" cy="5" r="4.500" fill="#b2422a" /><circle cx="5" cy="3" r="1.500" fill="#f0d050" /><circle cx="10" cy="5" r="1.300" fill="#eee" /><path d="M3 11h8" stroke="#fff" strokeWidth="1.500" /></svg></IconButton>
      <IconButton aria-label="Adblock Plus"><svg width="16" height="16"><path d="M5 0h6l5 5v6l-5 5H5l-5-5V5z" fill="#c70d0d" /><text x="8" y="10.500" textAnchor="middle" fontSize="7" fontWeight="700" fontFamily="Open Sans, sans-serif" fill="#fff">ABP</text></svg></IconButton>
      <VLine $h={34} />
      <IconButton $w={38} aria-label="Menu"><svg width="12" height="13" stroke="currentColor" strokeWidth="2"><path d="M0 1.500h12M0 6.500h12M0 11.500h12" /></svg></IconButton>
    </NavBar>
  </>
);

const DisplaysPanel = () => (
  <Side $w={342}>
    <PanelHead><Monitor /><h3>Displays</h3><FloatButton aria-label="Float Displays" /></PanelHead>
    <TreeBox $split={170}>
      <Tree $row={16} $split={170}>
        <tbody>
          {displays.map((r, i) => {
            const depth = r.depth ?? "top";
            return (
              <tr key={i}>
                <th scope="row">
                  <Key $depth={depth}>
                    {depth === "top" && <KeyArrow>{r.open ? <Caret c="#444" s={10} /> : <CaretRight />}</KeyArrow>}
                    {r.icon && <KeyIcon>{r.icon}</KeyIcon>}
                    <KeyLabel $blue={r.blue}>{r.k}</KeyLabel>
                  </Key>
                </th>
                <td>{r.check ? <Check type="checkbox" defaultChecked aria-label={r.k} $c={r.blue ? "#1a5fa8" : undefined} /> : r.v}</td>
              </tr>
            );
          })}
        </tbody>
      </Tree>
    </TreeBox>
    <SplitterRow />
    <Help><p><b>Topic</b></p><p>sensor_msgs/LaserScan topic to subscribe to.</p></Help>
    <ButtonRow>
      <PushButton>Add</PushButton>
      <PushButton disabled>Duplicate</PushButton>
      <PushButton disabled>Remove</PushButton>
      <PushButton disabled>Rename</PushButton>
    </ButtonRow>
  </Side>
);

const ViewsPanel = () => (
  <Side $w={271}>
    <PanelHead><Camera /><h3>Views</h3><FloatButton aria-label="Float Views" /></PanelHead>
    <TypeRow>
      <label htmlFor="viewType">Type:</label>
      <TypeSelect id="viewType" defaultValue="Orbit (rviz)"><option>Orbit (rviz)</option></TypeSelect>
      <PushButton $w={80}>Zero</PushButton>
    </TypeRow>
    <TreeBox $split={134}>
      <Tree $row={14} $split={134}>
        <tbody>
          <CurrentRow>
            <th scope="row"><ViewKey $root><ArrowSlot $w={18}><Caret c="#444" s={10} /></ArrowSlot>Current View</ViewKey></th>
            <td>Orbit (rviz)</td>
          </CurrentRow>
          {views.map(([k, v], i) => (
            <tr key={i}>
              <th scope="row"><ViewKey><ArrowSlot $w={16}>{k === "Focal Point" && <CaretRight />}</ArrowSlot>{k}</ViewKey></th>
              <td>{typeof v === "boolean" ? <Check type="checkbox" defaultChecked={v} aria-label={k} /> : v}</td>
            </tr>
          ))}
        </tbody>
      </Tree>
    </TreeBox>
  </Side>
);

const Panel = () => (
  <TaskBar>
    <StartButton aria-label="Start"><svg width="22" height="20" viewBox="0 0 22 20"><path d="M1 13C2 5 6 1 11 1s10 4 10 17l-2 1c0-5-2-8-6-10 3 3 4 6 4 10h-3c-1-4-2-7-5-8-3 0-6 1-8 2z" fill="#e4eef7" /><path d="M4 9l8-3 6 3M10 7q4 4 6 11" stroke="#5a90bd" fill="none" /></svg></StartButton>
    <Launchers>
      <button aria-label="Files"><svg width="22" height="22"><path d="M1 2h6l2 2h11v17H1z" fill="#e9e9e9" stroke="#888" /><rect x="4" y="5" width="16" height="15" rx="2" fill="#5e95c7" stroke="#38699b" /><path d="M14 9v10l2-2 2 4 2-1-2-4h3z" fill="#fff" stroke="#222" strokeWidth=".7" /></svg></button>
      <button aria-label="Web browser"><svg width="22" height="22"><rect x=".5" y=".5" width="21" height="21" rx="3" fill="#224b72" stroke="#163450" /><path d="M3 3l5-1 3 3-4 4-1 5-4-6zM12 3l6-1 2 5-3 2 2 5-4 5-3-5 1-5-2-3zM5 15l4 1 2 4H6z" fill="#a5d3e6" /></svg></button>
      <button aria-label="Desktop"><svg width="22" height="22"><rect x=".5" y=".5" width="21" height="21" rx="2" fill="#d9d9d9" stroke="#777" /><path d="M1 1h20v5H1z" fill="#5a8cba" /><path d="M12 3h2M15 3h2M18 3h2" stroke="#fff" /></svg></button>
    </Launchers>
    <Pager>
      <svg width="39" height="20"><rect x=".5" y=".5" width="38" height="19" fill="#fff" stroke="#111" /><path d="M4 5h30v10H4zM34 5h4v10h-4z" fill="none" stroke="#111" strokeWidth="1.300" /><path d="M17 4q5-3 5 3v6q-2 4-5 3" fill="none" stroke="#333" strokeWidth="2" /><path d="M16 4h6v5z" fill="#f08b1c" /></svg>
      <svg width="40" height="20"><rect x="1" y="1" width="38" height="18" fill="#8fb2d4" /><text x="11" y="13" fontSize="9" fontFamily="Open Sans, sans-serif" fill="#fff">RViz</text><rect x="25" y="8" width="14" height="9" fill="#dce9f5" /></svg>
    </Pager>
    <Task $on><TermIcon />root@7cf55ba1...</Task>
    <Task><svg width="18" height="18"><path d="M1 2h6l2 2h8v12H1z" fill="#dcdcdc" /><rect x="2" y="5" width="16" height="12" fill="#4c8dc6" /></svg>maps</Task>
    <Task><RvizMark c="#888" />config.rviz* - RViz</Task>
    <Tray>
      <svg width="22" height="14"><path d="M0 5h3l4-4v12L3 9H0z" fill="#a2a2a2" /><path d="M9 7h12" stroke="#a2a2a2" strokeWidth="2" strokeDasharray="2 2" /></svg>
      <span />
      <span>17:50</span>
      <svg width="17" height="18" fill="none" stroke="#555" strokeWidth="2"><path d="M5 3.500a7 7 0 1 0 7 0M8.500 0v9" /></svg>
    </Tray>
  </TaskBar>
);

export default function App() {
  return (
    <Desktop>
      <Global />
      <TopBar>
        <TopGroup>
          <ShellButton $wide>Activities</ShellButton>
          <ShellButton><FirefoxMono />Firefox Web Browser<Caret /></ShellButton>
        </TopGroup>
        <ClockButton>Oct 10  13:50</ClockButton>
        <TopGroup $end>
          <svg width="16" height="13" viewBox="0 0 16 13"><path d="M8 13L.5 4q7.500-6 15 0z" fill="#f2f2f2" /><path d="M1 5q7-5 14 0" stroke="#1d1d1d" fill="none" /></svg>
          <svg width="16" height="14" viewBox="0 0 16 14"><path d="M1 4h3l4-4v14l-4-4H1z" fill="#f2f2f2" /><path d="M10 4q2 3 0 6M12.500 2q4 5 0 10" stroke="#bbb" fill="none" strokeWidth="1.300" /></svg>
          <svg width="16" height="15" viewBox="0 0 16 15"><path d="M3 3L0 8h2l-1 4 4-5H3z" fill="#f2f2f2" /><path d="M7.500 2h7v12.500h-7zM9.500 0h3v2h-3z" fill="none" stroke="#f2f2f2" /><path d="M9 8h4v5H9z" fill="#f2f2f2" /></svg>
          <Caret s={10} />
        </TopGroup>
      </TopBar>
      <Body>
        <Dock>
          <DockItem $active $running aria-label="Firefox"><FirefoxLogo /></DockItem>
          <DockItem aria-label="Teapot"><Teapot /></DockItem>
          <DockItem $running aria-label="Notes"><NoteLogo /></DockItem>
          <DockItem $last aria-label="Show Applications"><AppsGrid /></DockItem>
        </Dock>
        <Main>
          <Browser />
          <Rviz>
            <RvizTitle>
              <RvizMark />
              <h2>config.rviz* - RViz</h2>
              <WinButtons>
                <svg width="54" height="12" stroke="#b3b3b3" strokeWidth="2"><path d="M1 6h9M22 6h10M27 1v10M44 1l9 9M53 1l-9 9" /></svg>
              </WinButtons>
            </RvizTitle>
            <MenuBar>
              <button><u>F</u>ile</button><button><u>P</u>anels</button><button><u>H</u>elp</button>
            </MenuBar>
            <ToolBar>
              <Grip />
              {tools.map(([name, icon]) => <Tool key={name} $on={name === "Move Camera"}>{icon}{name}</Tool>)}
              <ToolSeparator />
              <MiniTool aria-label="Add tool"><Plus /></MiniTool>
              <MiniTool aria-label="Remove tool"><Minus /></MiniTool>
              <MiniTool aria-label="Toolbar visibility"><Eye /></MiniTool>
            </ToolBar>
            <Workspace>
              <DisplaysPanel />
              <Gutter $w={22} aria-label="Collapse left panel">
                <svg width="2" height="16"><path d="M1 0v16" stroke="#b5b1ad" strokeDasharray="1 2" /></svg>
                <svg width="6" height="9"><path d="M6 0v9L0 4.500z" fill="#444" /></svg>
              </Gutter>
              <Viewport><Scene /></Viewport>
              <Gutter $w={22} aria-label="Collapse right panel" />
              <ViewsPanel />
            </Workspace>
            <PanelHead><Clock /><h3>Time</h3></PanelHead>
            <TimeRow>
              {times.map(([k, v]) => <Field key={k}>{k}<TextBox defaultValue={v} /></Field>)}
              <Experimental><Check type="checkbox" />Experimental</Experimental>
            </TimeRow>
            <StatusRow>
              <PushButton $w={51}>Reset</PushButton>
              <p><b>Left-Click:</b> Rotate. <b>Middle-Click:</b> Move X/Y. <b>Right-Click/Mouse Wheel:</b>: Zoom. <b>Shift</b>: More options.</p>
              <Fps>31 fps</Fps>
            </StatusRow>
            <Panel />
            <VncHandle aria-label="Open control bar">
              <svg width="9" height="40" fill="none"><path d="M1.500 0v12M6.500 0v12M1.500 27v12M6.500 27v12" stroke="#a9b4c2" strokeWidth="1.500" strokeDasharray="1.500 3.500" /><path d="M2 17l5 3-5 3z" fill="#fff" /></svg>
            </VncHandle>
          </Rviz>
        </Main>
      </Body>
      <Terminal>
        <TermTitle>
          <TermIcon s={18} />
          <h2>root@7cf55ba19cfe: /home/workspace/catkin_ws</h2>
          <WinButtons><svg width="9" height="4"><path d="M0 2h9" stroke="#888" strokeWidth="2" /></svg></WinButtons>
        </TermTitle>
        <TermHead>
          <svg width="14" height="14"><path d="M.5.500h6v6h-6z" fill="#c80000" stroke="#111" /><path d="M6.500.5h6v6h-6z" fill="#2878c8" stroke="#111" /><path d="M.5 6.500h6v6h-6z" fill="#ccc" stroke="#111" /><path d="M8 9h5l-2.500 3z" fill="#111" /></svg>
          <VLine $h={15} $c="#e08a8a" />
          <p>root@7cf55ba19cfe: /home/workspace/catkin_ws 80x24</p>
        </TermHead>
        <TermText>{termText}</TermText>
        <TermFoot />
      </Terminal>
    </Desktop>
  );
}
